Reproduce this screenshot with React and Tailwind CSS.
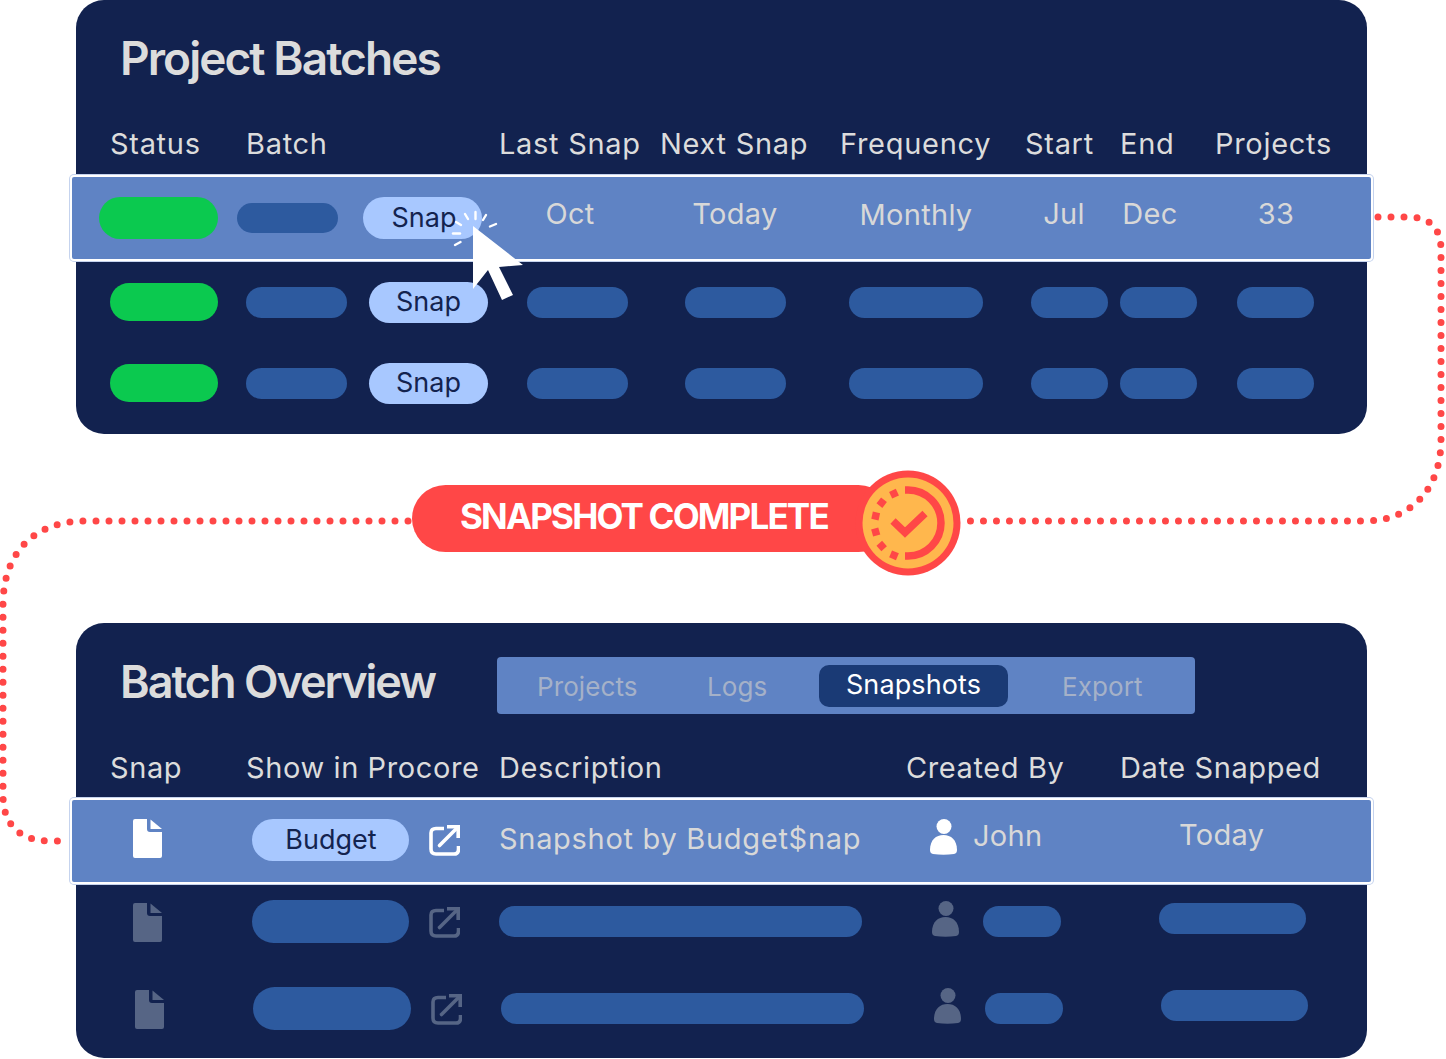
import React from 'react';

function DocIcon({ className }) {
  return (
    <svg viewBox="0 0 29 39" className={className} fill="currentColor">
      <path d="M2 0H14V10Q14 13 17 13H29V37Q29 39 27 39H2Q0 39 0 37V2Q0 0 2 0Z" />
      <path d="M17.5 .5L29 10H17.5Z" />
    </svg>
  );
}

function ExternalIcon({ className }) {
  return (
    <svg viewBox="0 0 31 31" className={className} fill="none" stroke="currentColor" strokeWidth="3.6">
      <path d="M15 3.5H7Q2 3.5 2 8V24Q2 29 7 29H25Q29.5 29 29.5 24V21" />
      <path d="M10.5 20.5L27 4" strokeLinecap="round" />
      <path d="M18 1.8H29.2V13" />
    </svg>
  );
}

function PersonIcon({ className }) {
  return (
    <svg viewBox="0 0 27 36" className={className} fill="currentColor">
      <circle cx="14" cy="7.5" r="7.5" />
      <path d="M0 31C0 21 6 16 13.5 16C21 16 27 21 27 31Q27 34.5 24 35Q13.5 36.5 3 35Q0 34.5 0 31Z" />
    </svg>
  );
}

function SnapButton({ className, label = 'Snap' }) {
  return (
    <div className={'flex items-center justify-center rounded-full bg-[#a8c8ff] text-[#13234f] text-[27px] tracking-normal ' + className}>
      {label}
    </div>
  );
}

function Connectors() {
  return (
    <svg className="absolute left-0 top-0 pointer-events-none" width="1446" height="1059" fill="none" stroke="#ff4747" strokeWidth="7" strokeLinecap="round" strokeDasharray="0 13">
      <path d="M1378 217H1408C1430 217 1441 228 1441 250V440C1441 490 1410 521 1365 521H966" />
      <path d="M408 521H85C35 521 3 552 3 605V795C3 825 20 841 50 841H62" />
    </svg>
  );
}

function Cursor() {
  return (
    <svg className="absolute left-[440px] top-[200px] pointer-events-none" width="90" height="105" viewBox="440 200 90 105">
      <path d="M473 226L523 265L499 267L513 295L502 300L488 270L473 289Z" fill="#fff" />
      <g stroke="#fff" strokeWidth="2.4" strokeLinecap="round">
        <path d="M456 222L461 225" />
        <path d="M465 214L468 219" />
        <path d="M475.500 212V219" />
        <path d="M486 215L483 220" />
        <path d="M496 224L490 226.500" />
        <path d="M453 233.500H460" />
        <path d="M455 245L460.500 242" />
      </g>
    </svg>
  );
}

const badgeTicks = [
  [-14, -29.3, 25],
  [-26.3, -20.3, 52],
  [-32.3, -7, 78],
  [-32.3, 9, 106],
  [-26.3, 23, 131],
  [-14, 32.3, 157],
];

function CompleteBadge() {
  return (
    <svg className="absolute left-[443px] top-[-15px]" width="106" height="106" viewBox="0 0 106 106">
      <circle cx="53" cy="53" r="52.500" fill="#ff4747" />
      <circle cx="53" cy="53" r="45.500" fill="#ffb74d" />
      <path d="M50 20H53A33 33 0 0 1 53 86H50" fill="none" stroke="#ff4747" strokeWidth="7.500" />
      {badgeTicks.map(([x, y, a]) => (
        <rect key={a} x="-3.700" y="-3.700" width="7.400" height="7.400" fill="#ff4747" transform={`translate(${53 + x} ${53 + y}) rotate(${-a})`} />
      ))}
      <path d="M38 51L50 62.500L70 43.500" fill="none" stroke="#ff4747" strokeWidth="7.500" />
    </svg>
  );
}

export default function App() {
  return (
    <div className="relative w-[1446px] h-[1059px] bg-white overflow-hidden font-['Inter',sans-serif]">
      {/* Project Batches */}
      <div className="ml-[76px] w-[1291px] h-[434px] rounded-[28px] bg-[#12224f]">
        <div className="h-[116px] pl-[44px] flex items-center text-[46px] font-semibold tracking-[-0.042em] text-[#dcdcdc]">
          Project Batches
        </div>
        <div className="h-[56px] mb-[3px] pl-[34px] grid grid-cols-[136px_253px_161px_180px_185px_95px_95px_1fr] items-center text-[29px] tracking-[0.7px] text-[#dcdcdc] whitespace-nowrap">
          <div>Status</div>
          <div>Batch</div>
          <div>Last Snap</div>
          <div>Next Snap</div>
          <div>Frequency</div>
          <div>Start</div>
          <div>End</div>
          <div>Projects</div>
        </div>

        <div className="-ml-[6px] w-[1303px] h-[86px] my-[1px] flex items-center rounded-[4px] border-2 border-white ring-1 ring-[#c5d3ee] bg-[#5f83c4] text-[29px] tracking-[0.3px] text-[#d8d8d8]">
          <div className="ml-[27px] w-[119px] h-[42px] rounded-full bg-[#0bc94f]" />
          <div className="ml-[19px] w-[101px] h-[30px] rounded-full bg-[#2d5a9f]" />
          <SnapButton className="ml-[25px] w-[119px] h-[42px] pl-[3px]" />
          <div className="ml-[38px] w-[100px] text-center -mt-[8px]">Oct</div>
          <div className="ml-[55px] w-[120px] text-center -mt-[8px]">Today</div>
          <div className="ml-[51px] w-[140px] text-center -mt-[6px]">Monthly</div>
          <div className="ml-[48px] w-[60px] text-center -mt-[8px]">Jul</div>
          <div className="ml-[26px] w-[60px] text-center -mt-[8px]">Dec</div>
          <div className="ml-[66px] w-[60px] text-center -mt-[8px]">33</div>
        </div>

        <div className="h-[80px] flex items-center mt-[1px]">
          <div className="ml-[34px] w-[108px] h-[38px] rounded-full bg-[#0bc94f]" />
          <div className="ml-[28px] w-[101px] h-[31px] rounded-full bg-[#2d5a9f]" />
          <SnapButton className="ml-[22px] w-[119px] h-[41px]" />
          <div className="ml-[39px] w-[101px] h-[31px] rounded-full bg-[#2d5a9f]" />
          <div className="ml-[57px] w-[101px] h-[31px] rounded-full bg-[#2d5a9f]" />
          <div className="ml-[63px] w-[134px] h-[31px] rounded-full bg-[#2d5a9f]" />
          <div className="ml-[48px] w-[77px] h-[31px] rounded-full bg-[#2d5a9f]" />
          <div className="ml-[12px] w-[77px] h-[31px] rounded-full bg-[#2d5a9f]" />
          <div className="ml-[40px] w-[77px] h-[31px] rounded-full bg-[#2d5a9f]" />
        </div>
        <div className="h-[80px] flex items-center mt-[1px]">
          <div className="ml-[34px] w-[108px] h-[38px] rounded-full bg-[#0bc94f]" />
          <div className="ml-[28px] w-[101px] h-[31px] rounded-full bg-[#2d5a9f]" />
          <SnapButton className="ml-[22px] w-[119px] h-[41px]" />
          <div className="ml-[39px] w-[101px] h-[31px] rounded-full bg-[#2d5a9f]" />
          <div className="ml-[57px] w-[101px] h-[31px] rounded-full bg-[#2d5a9f]" />
          <div className="ml-[63px] w-[134px] h-[31px] rounded-full bg-[#2d5a9f]" />
          <div className="ml-[48px] w-[77px] h-[31px] rounded-full bg-[#2d5a9f]" />
          <div className="ml-[12px] w-[77px] h-[31px] rounded-full bg-[#2d5a9f]" />
          <div className="ml-[40px] w-[77px] h-[31px] rounded-full bg-[#2d5a9f]" />
        </div>
      </div>

      {/* Snapshot complete */}
      <div className="h-[189px] pt-[51px] pl-[412px]">
        <div className="relative w-[480px] h-[67px] rounded-full bg-[#ff4747] pl-[48px] flex items-center text-[35px] font-bold tracking-[-0.052em] text-white whitespace-nowrap">
          <div className="-mt-[4px]">SNAPSHOT COMPLETE</div>
          <CompleteBadge />
        </div>
      </div>

      {/* Batch Overview */}
      <div className="ml-[76px] w-[1291px] h-[435px] rounded-[28px] bg-[#12224f]">
        <div className="h-[118px] flex items-start">
          <div className="w-[421px] h-[118px] pl-[44px] flex items-center text-[45px] font-semibold tracking-[-0.045em] text-[#dcdcdc]">
            Batch Overview
          </div>
          <div className="mt-[34px] w-[698px] h-[57px] rounded-[4px] bg-[#5f83c4] flex items-center text-[26px] tracking-[0.1px] text-[#a5b1c8] whitespace-nowrap">
            <div className="ml-[40px] w-[99px] mt-[2px]">Projects</div>
            <div className="ml-[71px] w-[57px] mt-[2px]">Logs</div>
            <div className="ml-[55px] w-[189px] h-[42px] rounded-[10px] bg-[#1a3a75] flex items-center justify-center text-[27px] text-white">Snapshots</div>
            <div className="ml-[54px] w-[81px] mt-[2px]">Export</div>
          </div>
        </div>
        <div className="h-[54px] mb-[3px] pl-[34px] grid grid-cols-[136px_253px_407px_214px_1fr] items-center text-[29px] tracking-[0.6px] text-[#dcdcdc] whitespace-nowrap">
          <div>Snap</div>
          <div>Show in Procore</div>
          <div>Description</div>
          <div>Created By</div>
          <div>Date Snapped</div>
        </div>

        <div className="-ml-[6px] w-[1303px] h-[86px] my-[1px] flex items-start rounded-[4px] border-2 border-white ring-1 ring-[#c5d3ee] bg-[#5f83c4] text-[29px] tracking-[0.3px] text-[#d8d8d8] whitespace-nowrap">
          <DocIcon className="ml-[61px] mt-[19px] w-[29px] h-[39px] text-white" />
          <SnapButton label="Budget" className="ml-[90px] mt-[19px] w-[157px] h-[42px] pl-[1px]" />
          <ExternalIcon className="ml-[20px] mt-[25px] w-[31px] h-[31px] text-white" />
          <div className="ml-[39px] mt-[17px] w-[362px] tracking-[0.7px]">Snapshot by Budget$nap</div>
          <PersonIcon className="ml-[69px] mt-[19px] w-[27px] h-[36px] text-white" />
          <div className="ml-[16px] mt-[14px] w-[69px]">John</div>
          <div className="ml-[137px] mt-[13px]">Today</div>
        </div>

        <div className="h-[87px] flex items-start">
          <DocIcon className="ml-[57px] mt-[18px] w-[29px] h-[39px] text-[#566585]" />
          <div className="ml-[90px] mt-[15px] w-[157px] h-[43px] rounded-full bg-[#2d5a9f]" />
          <ExternalIcon className="ml-[20px] mt-[22px] w-[31px] h-[31px] text-[#566585]" />
          <div className="ml-[39px] mt-[21px] w-[363px] h-[31px] rounded-full bg-[#2d5a9f]" />
          <PersonIcon className="ml-[70px] mt-[16px] w-[27px] h-[36px] text-[#566585]" />
          <div className="ml-[24px] mt-[21px] w-[78px] h-[31px] rounded-full bg-[#2d5a9f]" />
          <div className="ml-[98px] mt-[18px] w-[147px] h-[31px] rounded-full bg-[#2d5a9f]" />
        </div>
        <div className="h-[86px] flex items-start">
          <DocIcon className="ml-[59px] mt-[18px] w-[29px] h-[39px] text-[#566585]" />
          <div className="ml-[89px] mt-[15px] w-[158px] h-[43px] rounded-full bg-[#2d5a9f]" />
          <ExternalIcon className="ml-[20px] mt-[22px] w-[31px] h-[31px] text-[#566585]" />
          <div className="ml-[39px] mt-[21px] w-[363px] h-[31px] rounded-full bg-[#2d5a9f]" />
          <PersonIcon className="ml-[70px] mt-[16px] w-[27px] h-[36px] text-[#566585]" />
          <div className="ml-[24px] mt-[21px] w-[78px] h-[31px] rounded-full bg-[#2d5a9f]" />
          <div className="ml-[98px] mt-[18px] w-[147px] h-[31px] rounded-full bg-[#2d5a9f]" />
        </div>
      </div>

      <Connectors />
      <Cursor />
    </div>
  );
}
